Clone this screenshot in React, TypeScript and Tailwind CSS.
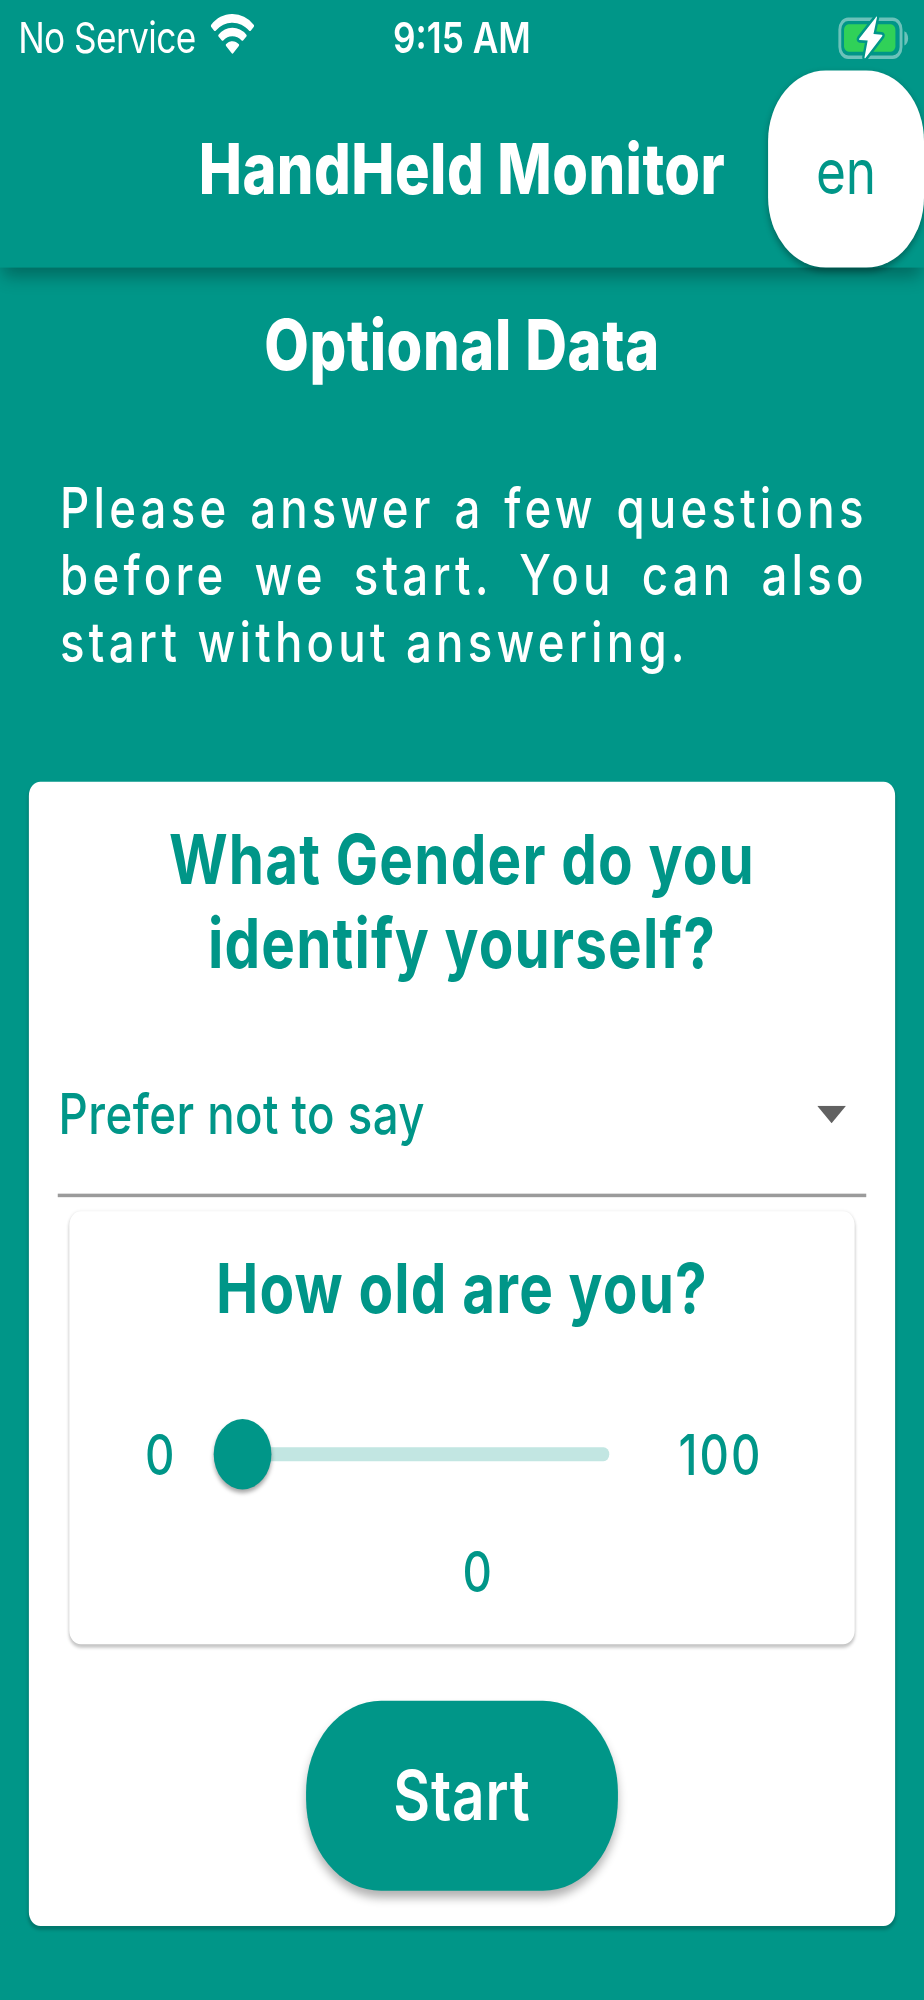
import type { ReactNode } from "react";

const GENDER = "Prefer not to say";

const AGE = { min: 0, max: 100, value: 0 };

function WifiIcon() {
  return (
    <svg viewBox="0 0 15 11.3" className="mb-[1px] h-[11.3px] w-[15px]" aria-hidden="true">
      <g fill="#fff">
        <path d="M7.5 0C4.6 0 2 1.1.15 3a.45.45 0 0 0 0 .65l.95 1a.5.5 0 0 0 .68 0A8.2 8.2 0 0 1 7.5 2.45c2.2 0 4.2.85 5.72 2.2a.5.5 0 0 0 .68 0l.95-1a.45.45 0 0 0 0-.65A10.4 10.4 0 0 0 7.5 0Z" />
        <path d="M7.5 3.9a6.9 6.9 0 0 0-4.75 1.9.45.45 0 0 0 0 .65l1 1a.48.48 0 0 0 .66 0A4.5 4.5 0 0 1 7.5 6.3c1.18 0 2.27.43 3.1 1.15a.48.48 0 0 0 .66 0l1-1a.45.45 0 0 0 0-.65A6.9 6.9 0 0 0 7.5 3.9Z" />
        <path d="M7.5 7.7c-.85 0-1.6.3-2.15.8a.42.42 0 0 0 0 .62l1.83 1.95a.44.44 0 0 0 .64 0l1.83-1.95a.42.42 0 0 0 0-.62c-.55-.5-1.3-.8-2.15-.8Z" />
      </g>
    </svg>
  );
}

function BatteryIcon() {
  return (
    <svg viewBox="0 3 25 14" className="h-[14px] w-[25px]" aria-hidden="true">
      <rect x=".85" y="4.45" width="21.2" height="10.8" rx="2.9" fill="none" stroke="#fff" strokeOpacity=".42" strokeWidth="1" />
      <path d="M23.2 7.9c.8.3 1.3 1.1 1.3 2s-.5 1.7-1.3 2Z" fill="#fff" fillOpacity=".42" />
      <rect x="2.3" y="5.9" width="17.8" height="7.8" rx="1.6" fill="#30d158" />
      <path
        d="M13.3 3.95 7.6 9.9q-.3.4.15.45l2.75.15-1.1 4.8q0 .5.4.1l5.7-6.1q.3-.4-.15-.45l-2.85-.2 1.2-4.7q0-.4-.4-.1Z"
        fill="#fff"
        stroke="#009688"
        strokeWidth="1.6"
        paintOrder="stroke"
      />
    </svg>
  );
}

function Question({ children }: { children: ReactNode }) {
  return (
    <h2 className="text-center text-[19.6px] leading-[24px] font-bold tracking-[0.41px]">
      {children}
    </h2>
  );
}

function StatusBar() {
  return (
    <div className="grid h-5 grid-cols-3 items-center text-[12.2px] leading-[20px]">
      <div className="flex items-center gap-[5px] pl-[6.3px]">
        <span className="pt-[1px] whitespace-nowrap tracking-[-0.2px]">No Service</span>
        <WifiIcon />
      </div>
      <span className="pt-[1px] text-center font-semibold whitespace-nowrap">9:15 AM</span>
      <div className="flex justify-end pr-[5px]">
        <BatteryIcon />
      </div>
    </div>
  );
}

function AppBar() {
  return (
    <header className="relative bg-[#009688] shadow-[0_4px_5px_-1px_rgba(0,0,0,0.22),0_1px_6px_-1px_rgba(0,0,0,0.14)]">
      <StatusBar />
      <div className="flex h-14 items-center justify-end">
        <h1 className="flex-1 pl-[54px] text-center text-[20px] font-extrabold whitespace-nowrap tracking-[0.16px]">
          HandHeld Monitor
        </h1>
        <button
          type="button"
          className="h-14 w-[54px] rounded-[20px] bg-white pt-[2px] text-[17.8px] text-[#009688] shadow-[0_1px_2px_rgba(0,0,0,0.3)]"
        >
          en
        </button>
      </div>
    </header>
  );
}

function GenderSelect() {
  return (
    <div className="mx-[10px] mt-[12px] flex h-[48px] items-center justify-between border-b border-[#9b9b9b] pt-[2px] pr-[7px] pl-[0.3px]">
      <span className="text-[15.8px] font-medium tracking-[0.15px]">{GENDER}</span>
      <svg viewBox="0 0 10 5" className="h-[5px] w-[10px]" aria-hidden="true">
        <path d="M0 0h10L5 5Z" fill="#616161" />
      </svg>
    </div>
  );
}

function AgeCard() {
  const percent = ((AGE.value - AGE.min) / (AGE.max - AGE.min)) * 100;

  return (
    <div className="mx-[14px] mt-[4px] rounded-[4px] bg-white pt-[10px] pb-[11px] shadow-[0_1px_1px_rgba(0,0,0,0.2),0_0_1px_rgba(0,0,0,0.08)]">
      <Question>How old are you?</Question>
      <div className="mt-[11px] flex h-12 items-center text-[15.8px] font-medium">
        <span className="w-[60px] pt-[1.5px] pl-[26.2px]">{AGE.min}</span>
        <div className="relative h-1 w-[127px] rounded-[2px] bg-[#c2e6e2]">
          <div
            className="absolute -top-2 -ml-[10px] size-5 rounded-full bg-[#009688] shadow-[0_1px_1.5px_rgba(0,0,0,0.35)]"
            style={{ left: `${percent}%` }}
          />
        </div>
        <span className="pt-[1.5px] pl-[24px] tracking-[0.7px]">{AGE.max}</span>
      </div>
      <p className="pl-[10.6px] text-center text-[15.8px] leading-[19px] font-medium">{AGE.value}</p>
    </div>
  );
}

export default function App() {
  return (
    <div className="h-[2000px] w-[924px] overflow-hidden bg-[#009688]">
      {/* 320x568 phone canvas, stretched to fill the page */}
      <div className="h-[568px] w-[320px] origin-top-left scale-x-[2.8875] scale-y-[3.52113] bg-[#009688] font-['Inter',sans-serif] text-white">
        <AppBar />
        <main className="px-[10px] pt-[10px]">
          <h2 className="text-center text-[20px] leading-[24px] font-extrabold tracking-[0.22px]">
            Optional Data
          </h2>
          <p className="mr-[9.5px] ml-[10.8px] mt-[25px] text-justify text-[15.8px] leading-[19px] font-medium tracking-[1.45px]">
            Please answer a few questions before we start. You can also start without answering.
          </p>
          <section className="mt-[30px] rounded-[4px] bg-white pt-[10px] pb-[10px] text-[#009688] shadow-[0_1px_1px_rgba(0,0,0,0.2)]">
            <Question>
              What Gender do you
              <br />
              identify yourself?
            </Question>
            <GenderSelect />
            <AgeCard />
            <div className="mt-[16px] flex justify-center">
              <button
                type="button"
                className="h-[54px] w-[108px] rounded-[26px] bg-[#009688] pt-[2px] text-[19.6px] font-semibold tracking-[0.3px] text-white shadow-[0_2px_3px_rgba(0,0,0,0.3)]"
              >
                Start
              </button>
            </div>
          </section>
        </main>
      </div>
    </div>
  );
}
